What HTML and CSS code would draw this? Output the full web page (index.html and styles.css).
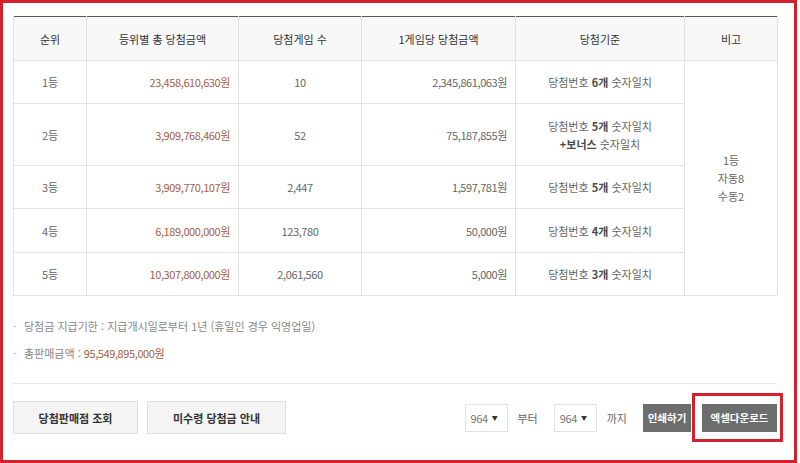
FILE: index.html
```html
<!DOCTYPE html>
<html lang="ko">
<head>
<meta charset="utf-8">
<link rel="stylesheet" href="styles.css">
</head>
<body>
<div class="frame">
  <table class="result">
    <colgroup>
      <col class="c1"><col class="c2"><col class="c3"><col class="c4"><col class="c5"><col class="c6">
    </colgroup>
    <thead>
      <tr class="h-head">
        <th>순위</th><th>등위별 총 당첨금액</th><th>당첨게임 수</th><th>1게임당 당첨금액</th><th>당첨기준</th><th>비고</th>
      </tr>
    </thead>
    <tbody>
      <tr class="h43">
        <td class="center">1등</td>
        <td class="num amt">23,458,610,630원</td>
        <td class="center num">10</td>
        <td class="num">2,345,861,063원</td>
        <td class="center">당첨번호 <b>6개</b> 숫자일치</td>
        <td class="center note" rowspan="5">1등<br>자동8<br>수동2</td>
      </tr>
      <tr class="h62">
        <td class="center">2등</td>
        <td class="num amt">3,909,768,460원</td>
        <td class="center num">52</td>
        <td class="num">75,187,855원</td>
        <td class="center two">당첨번호 <b>5개</b> 숫자일치<br><b>+보너스</b> 숫자일치</td>
      </tr>
      <tr class="h43">
        <td class="center">3등</td>
        <td class="num amt">3,909,770,107원</td>
        <td class="center num">2,447</td>
        <td class="num">1,597,781원</td>
        <td class="center">당첨번호 <b>5개</b> 숫자일치</td>
      </tr>
      <tr class="h44">
        <td class="center">4등</td>
        <td class="num amt">6,189,000,000원</td>
        <td class="center num">123,780</td>
        <td class="num">50,000원</td>
        <td class="center">당첨번호 <b>4개</b> 숫자일치</td>
      </tr>
      <tr class="h43">
        <td class="center">5등</td>
        <td class="num amt">10,307,800,000원</td>
        <td class="center num">2,061,560</td>
        <td class="num">5,000원</td>
        <td class="center">당첨번호 <b>3개</b> 숫자일치</td>
      </tr>
    </tbody>
  </table>

  <ul class="notes">
    <li><span class="dash">-</span>당첨금 지급기한 : 지급개시일로부터 1년 (휴일인 경우 익영업일)</li>
    <li><span class="dash">-</span>총판매금액 : <span class="amt num">95,549,895,000원</span></li>
  </ul>

  <div class="actions">
    <div class="left-btns">
      <button class="btn-light w125">당첨판매점 조회</button>
      <button class="btn-light w139">미수령 당첨금 안내</button>
    </div>
    <div class="right-ctrls">
      <div class="select">964 <span class="arrow">▼</span></div>
      <span class="label">부터</span>
      <div class="select">964 <span class="arrow">▼</span></div>
      <span class="label">까지</span>
      <button class="btn-dark w48">인쇄하기</button>
      <span class="highlight-wrap">
        <button class="btn-dark w75">엑셀다운로드</button>
        <span class="highlight"></span>
      </span>
    </div>
  </div>
</div>
</body>
</html>
```

FILE: styles.css
```css
* { box-sizing: border-box; }
html, body {
  margin: 0;
  padding: 0;
  background: #fff;
}
body {
  font-family: "Noto Sans CJK KR", "Noto Sans", sans-serif;
  font-size: 11px;
  color: #666;
}
.frame {
  width: 797px;
  height: 463px;
  border: 3px solid #d3222b;
  padding: 13px 17px 0 10px;
  display: flex;
  flex-direction: column;
}
.result {
  width: 764px;
  border-collapse: collapse;
  table-layout: fixed;
  border-top: 1px solid #5a5a5a;
}
.c1 { width: 73px; }
.c2 { width: 152px; }
.c3 { width: 123px; }
.c4 { width: 154px; }
.c5 { width: 169px; }
.c6 { width: 93px; }
.result th, .result td {
  border: 1px solid #e2e2e2;
  padding: 0 8px;
  line-height: 18px;
  vertical-align: middle;
}
.result th {
  background: #f8f8f8;
  font-weight: normal;
  color: #333;
  text-align: center;
  border-top: none;
}
.h-head { height: 44px; }
.h43 { height: 43px; }
.h44 { height: 44px; }
.h62 { height: 62px; }
.center { text-align: center; }
.num {
  text-align: right;
  letter-spacing: -0.4px;
}
.center.num { text-align: center; }
.amt { color: #a6613f; }
.result b { color: #4a4a4a; font-weight: bold; }
.note { line-height: 20px; }

.notes {
  list-style: none;
  margin: 0;
  padding: 17px 0 16px;
  border-bottom: 1px solid #ebebeb;
  width: 764px;
  color: #888;
}
.notes li {
  line-height: 27px;
  display: flex;
  align-items: center;
}
.dash {
  color: #aaa;
  width: 11px;
}
.notes .amt { margin-left: 3px; }

.actions {
  width: 764px;
  padding-top: 17px;
  display: flex;
  justify-content: space-between;
  align-items: center;
}
.left-btns {
  display: flex;
  gap: 9px;
}
button {
  font-family: inherit;
  margin: 0;
  cursor: pointer;
}
.btn-light {
  height: 33px;
  background: #f4f4f4;
  border: 1px solid #dedede;
  color: #333;
  font-weight: bold;
  font-size: 11px;
  padding: 0;
}
.w125 { width: 125px; }
.w139 { width: 139px; }
.right-ctrls {
  display: flex;
  align-items: center;
}
.select {
  width: 43px;
  height: 28px;
  border: 1px solid #e2e2e2;
  display: flex;
  align-items: center;
  padding-left: 5px;
  color: #777;
  letter-spacing: -0.4px;
  gap: 4px;
}
.arrow {
  font-size: 6px;
  color: #333;
}
.label {
  margin: 0 16px 0 10px;
  color: #666;
}
.btn-dark {
  height: 28px;
  background: #6d6d6d;
  border: none;
  color: #fff;
  font-weight: bold;
  font-size: 10.5px;
  padding: 0;
}
.w48 { width: 48px; }
.w75 { width: 75px; }
.highlight-wrap {
  position: relative;
  margin-left: 11px;
  display: flex;
}
.highlight {
  position: absolute;
  left: -10px;
  top: -11px;
  width: 91px;
  height: 49px;
  border: 3px solid #d3222b;
  pointer-events: none;
}
```
